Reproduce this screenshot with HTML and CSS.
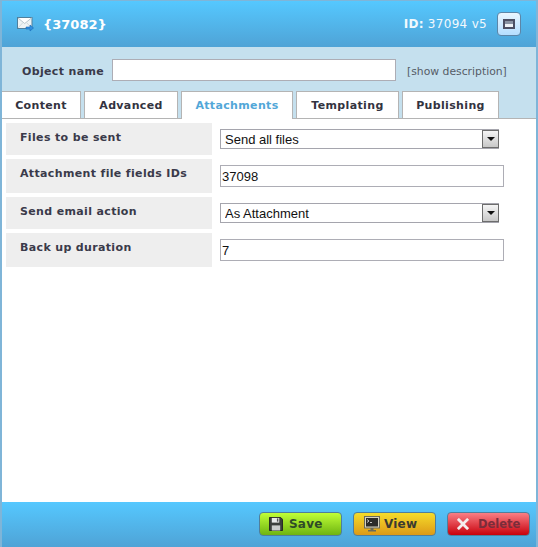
FILE: index.html
```html
<!DOCTYPE html>
<html lang="en">
<head>
  <meta charset="UTF-8" />
  <title>{37082}</title>
  <link rel="stylesheet" href="styles.css">
</head>
<body>
  <div class="window">
    <header class="title-bar">
      <svg class="mail-icon" width="17" height="15" viewBox="0 0 17 15">
        <rect x="0.5" y="0.5" width="14.5" height="11" fill="#eef3f4" stroke="#4f7f9c"/>
        <path d="M1 1 L7.7 6.5 L14.5 1" fill="#fff" stroke="#b9c6cc"/>
        <path d="M1 11 L6 5.5 M14.5 11 L9.5 5.5" stroke="#cfd8dc" fill="none"/>
        <path d="M9 10 H13 V8 L16.5 11 L13 14 V12 H9 Z" fill="#2f8fe0" stroke="#1a6cb8" stroke-width="0.6"/>
      </svg>
      <span class="title">{37082}</span>
      <span class="object-id"><b>ID:</b> 37094 v5</span>
      <button class="min-btn" type="button"><span class="min-glyph"></span></button>
    </header>

    <div class="tab-band">
      <div class="name-row">
        <label class="name-label" for="objectName">Object name</label>
        <input class="name-input" id="objectName" type="text" />
        <span class="show-desc">[show description]</span>
      </div>
      <nav class="tabs">
        <div class="tab tab-content">Content</div>
        <div class="tab tab-advanced">Advanced</div>
        <div class="tab tab-attachments active">Attachments</div>
        <div class="tab tab-templating">Templating</div>
        <div class="tab tab-publishing">Publishing</div>
      </nav>
    </div>

    <main class="form-area">
      <div class="form-row row-a">
        <div class="field-label">Files to be sent</div>
        <div class="select-wrap">
          <select class="field-select"><option>Send all files</option></select>
        </div>
      </div>
      <div class="form-row row-b">
        <div class="field-label">Attachment file fields IDs</div>
        <input class="field-input" type="text" value="37098" />
      </div>
      <div class="form-row row-c">
        <div class="field-label">Send email action</div>
        <div class="select-wrap">
          <select class="field-select"><option>As Attachment</option></select>
        </div>
      </div>
      <div class="form-row row-d">
        <div class="field-label">Back up duration</div>
        <input class="field-input" type="text" value="7" />
      </div>
    </main>

    <footer class="action-bar">
      <button class="action-btn save" type="button">
        <svg width="14" height="14" viewBox="0 0 15 15">
          <path d="M0.5 0.5 H12.5 L14.5 2.5 V14.5 H0.5 Z" fill="#3b3f3c" stroke="#222"/>
          <rect x="3" y="1" width="8" height="5" fill="#e8eaea"/>
          <rect x="8.5" y="1.5" width="1.5" height="3.5" fill="#555"/>
          <rect x="3" y="9" width="9" height="5.5" fill="#c9cccb"/>
        </svg>
        Save
      </button>
      <button class="action-btn view" type="button">
        <svg width="16" height="16" viewBox="0 0 16 16">
          <rect x="0.5" y="0.5" width="15" height="11.5" fill="#d9d4c0" stroke="#6a6a5c"/>
          <rect x="2" y="2" width="12" height="8.5" fill="#2c2c2a"/>
          <path d="M3 3.5 L5 5 L3 6.5" stroke="#eee" fill="none" stroke-width="0.8"/>
          <path d="M6 6.5 H8" stroke="#eee" stroke-width="0.8"/>
          <path d="M6.5 12 H9.5 V14 H12 V15.5 H4 V14 H6.5 Z" fill="#6a6a5c"/>
        </svg>
        View
      </button>
      <button class="action-btn delete" type="button">
        <svg width="12" height="12" viewBox="0 0 13 13">
          <path d="M2 2 L11 11 M11 2 L2 11" stroke="#f4eeee" stroke-width="3" stroke-linecap="square"/>
        </svg>
        Delete
      </button>
    </footer>
  </div>
</body>
</html>
```

FILE: styles.css
```css
html, body {
  margin: 0;
  height: 100%;
}

body {
  font-family: "DejaVu Sans", Verdana, sans-serif;
  background-color: #fff;
  overflow: hidden;
}

.window {
  box-sizing: border-box;
  width: 538px;
  height: 547px;
  display: flex;
  flex-direction: column;
  border: 2px solid #7fb5d8;
  border-bottom: none;
  border-top-width: 1px;
}

/* title bar */
.title-bar {
  height: 46px;
  flex: none;
  box-sizing: border-box;
  display: flex;
  align-items: center;
  padding: 0 15px 0 15px;
  background: linear-gradient(#55c8ff, #4fa3d6);
  color: #fff;
}

.mail-icon {
  margin-top: 1px;
}

.title {
  margin-left: 9px;
  font-size: 13px;
  font-weight: bold;
}

.object-id {
  margin-left: auto;
  font-size: 12px;
  letter-spacing: 0.3px;
  color: #f2f9fd;
}

.min-btn {
  width: 24px;
  height: 24px;
  margin-left: 10px;
  padding: 0;
  display: flex;
  align-items: center;
  justify-content: center;
  border: 1px solid #5c86a8;
  border-radius: 4px;
  background: linear-gradient(#eaf6ff, #b4deff);
}

.min-glyph {
  box-sizing: border-box;
  width: 12px;
  height: 10px;
  border: 2px solid #4c4f63;
  background: linear-gradient(#8a93a3 50%, #eef2f6 50%);
}

/* name row and tabs */
.tab-band {
  flex: none;
  height: 71px;
  display: flex;
  flex-direction: column;
  background-color: #c5e0ee;
  border-bottom: 1px solid #b4b4b4;
}

.name-row {
  height: 44px;
  display: flex;
  align-items: center;
  flex: none;
  padding-top: 2px;
  box-sizing: border-box;
}

.name-label {
  width: 110px;
  box-sizing: border-box;
  margin-top: 2px;
  padding-left: 20px;
  font-size: 11px;
  letter-spacing: 0.35px;
  font-weight: bold;
  color: #3a3a4a;
}

.name-input {
  box-sizing: border-box;
  width: 284px;
  height: 22px;
  border: 1px solid #adadb5;
  background: #fff;
  padding: 0 3px;
}

.show-desc {
  margin: 2px 0 0 11px;
  font-size: 10.8px;
  color: #555c66;
}

.tabs {
  display: flex;
  height: 27px;
}

.tab {
  box-sizing: border-box;
  height: 27px;
  margin-right: 3px;
  padding-top: 1px;
  display: flex;
  align-items: center;
  justify-content: center;
  background: #fff;
  border: 1px solid #b4b4b4;
  border-bottom: none;
  font-size: 11px;
  letter-spacing: 0.35px;
  font-weight: bold;
  color: #33333f;
}

.tab-content { width: 79px; border-left: none; }
.tab-advanced { width: 94px; }
.tab-attachments { width: 112px; }
.tab-templating { width: 103px; }
.tab-publishing { width: 97px; }

.tab.active {
  height: 28px;
  padding-top: 0;
  color: #52a7d8;
  position: relative;
  z-index: 1;
}

/* form */
.form-area {
  flex: 1;
  background: #fff;
  padding: 4px 0 0 4px;
  display: flex;
  flex-direction: column;
  gap: 4px;
}

.form-row {
  display: flex;
  align-items: flex-start;
  gap: 8px;
}

.field-label {
  box-sizing: border-box;
  width: 206px;
  padding: 8px 0 0 14px;
  background-color: #eee;
  font-size: 11px;
  letter-spacing: 0.35px;
  font-weight: bold;
  color: #3a3a4a;
}

.row-a .field-label, .row-c .field-label { height: 32px; }
.row-b .field-label, .row-d .field-label { height: 34px; }

.select-wrap {
  position: relative;
  width: 279px;
  height: 20px;
  margin-top: 6px;
}

.field-select {
  box-sizing: border-box;
  display: block;
  width: 100%;
  height: 100%;
  appearance: none;
  border: 1px solid #a5a5ad;
  border-radius: 0;
  background: #fff;
  padding: 0 0 0 4px;
  font-family: "Liberation Sans", Arial, sans-serif;
  font-size: 13px;
  color: #111;
}

/* the little arrow button over the select */
.select-wrap::before {
  content: "";
  position: absolute;
  top: 1px;
  right: 0;
  width: 15px;
  height: 16px;
  border: 1px solid #6d6d6d;
  background: linear-gradient(#f5f5f5, #c8c8c8);
  pointer-events: none;
}

.select-wrap::after {
  content: "";
  position: absolute;
  top: 8px;
  right: 4px;
  border-style: solid;
  border-width: 4px 4px 0;
  border-color: #111 transparent transparent;
  pointer-events: none;
}

.field-input {
  box-sizing: border-box;
  width: 284px;
  height: 22px;
  margin-top: 6px;
  border: 1px solid #adadb5;
  padding: 0 1px;
  font-family: "Liberation Sans", Arial, sans-serif;
  font-size: 13px;
  color: #111;
}

/* footer */
.action-bar {
  flex: none;
  height: 45px;
  box-sizing: border-box;
  display: flex;
  align-items: center;
  justify-content: flex-end;
  gap: 11px;
  padding: 0 6px 1px 0;
  background: linear-gradient(#55c8ff, #4fa3d6);
}

.action-btn {
  box-sizing: border-box;
  width: 83px;
  height: 24px;
  display: flex;
  align-items: center;
  padding: 0;
  border: 1px solid #4f7f9c;
  border-radius: 4px;
  font-family: "DejaVu Sans", Verdana, sans-serif;
  font-size: 12px;
  letter-spacing: 0.2px;
  font-weight: bold;
}

.save {
  gap: 6px;
  padding-left: 9px;
  background: linear-gradient(#c0ff37, #6eb411);
  color: #2f4a28;
}

.view {
  gap: 4px;
  padding-left: 10px;
  background: linear-gradient(#f5dc2a, #dd9a17);
  color: #3b3a30;
}

.delete {
  gap: 9px;
  padding-left: 9px;
  letter-spacing: 0;
  font-size: 11.5px;
  background: linear-gradient(#f97f85, #c9000c);
  color: #7a2d3a;
}
```
